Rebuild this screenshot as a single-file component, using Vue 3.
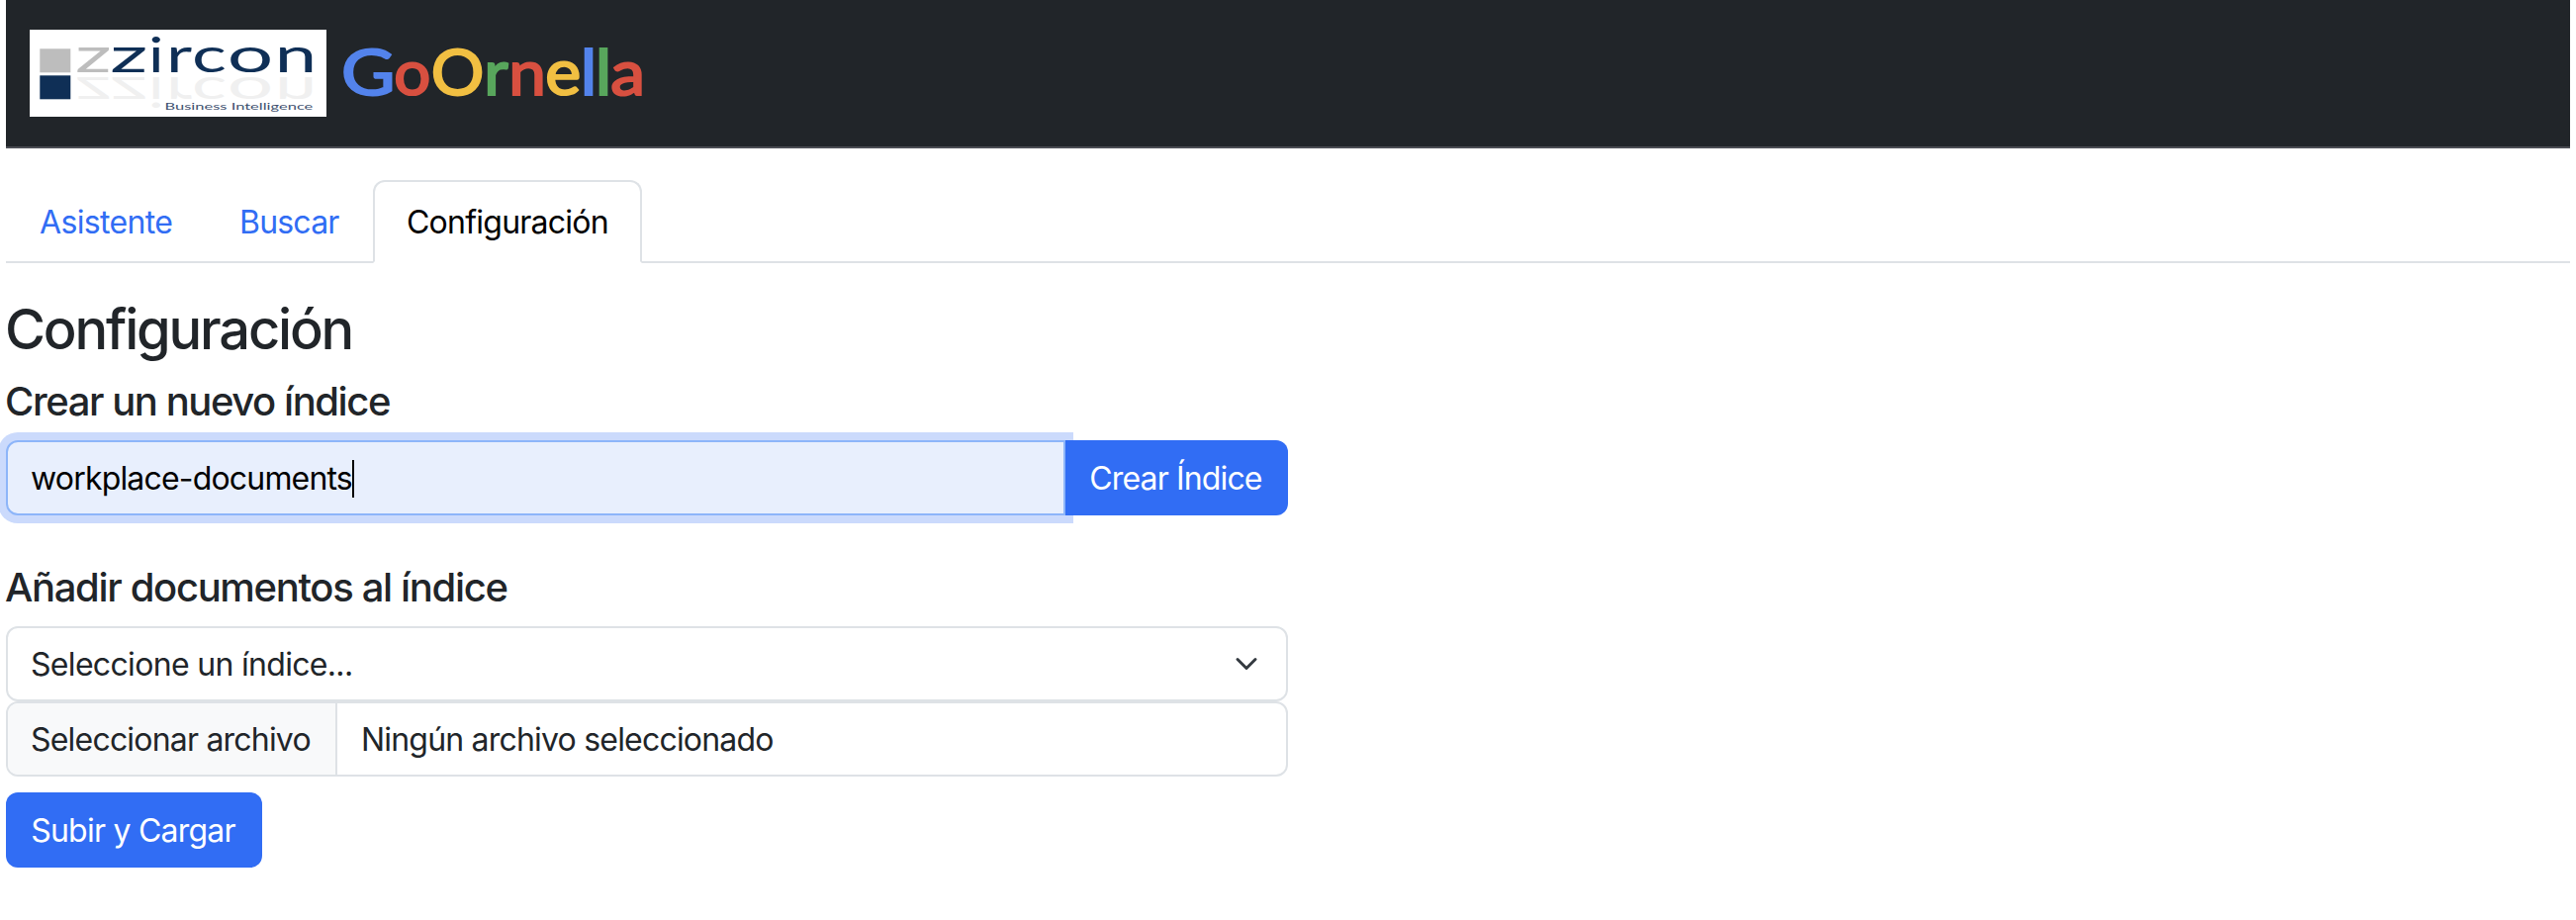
<script setup>
import { ref } from 'vue'

const tabs = [
  { label: 'Asistente', cls: 'assistant' },
  { label: 'Buscar', cls: 'search' },
  { label: 'Configuración', cls: 'settings' },
]
const active = ref('Configuración')
const indexName = ref('workplace-documents')

// Each letter: character, left offset, horizontal and vertical scale, colour
const brand = [
  { c: 'G', x: 15, sx: 0.745, sy: 0.648, fill: '#5383ec' },
  { c: 'o', x: 68.2, sx: 0.654, sy: 0.645, fill: '#d85040' },
  { c: 'O', x: 105.7, sx: 0.67, sy: 0.648, fill: '#f1bf42' },
  { c: 'r', x: 159.2, sx: 0.67, sy: 0.645, fill: '#58a65c' },
  { c: 'n', x: 184.2, sx: 0.674, sy: 0.645, fill: '#d85040' },
  { c: 'e', x: 221.2, sx: 0.68, sy: 0.645, fill: '#f1bf42' },
  { c: 'l', x: 256.8, sx: 0.7, sy: 0.635, fill: '#5383ec' },
  { c: 'l', x: 271.8, sx: 0.7, sy: 0.635, fill: '#58a65c' },
  { c: 'a', x: 287.2, sx: 0.7, sy: 0.645, fill: '#d85040' },
]
const zircon = [
  { c: 'z', x: 46, sx: 0.81, light: true },
  { c: 'z', x: 81.3, sx: 0.84 },
  { c: 'i', x: 120, sx: 0.65 },
  { c: 'r', x: 138, sx: 0.72 },
  { c: 'c', x: 164, sx: 0.73 },
  { c: 'o', x: 199.8, sx: 0.82 },
  { c: 'n', x: 247.7, sx: 0.76 },
]
const place = (l, base, sy) => `translate(${l.x} ${base}) scale(${l.sx} ${sy})`
</script>

<template>
  <div class="page">
    <header class="navbar">
      <svg class="company" width="300" height="88" viewBox="0 0 300 88">
        <rect width="300" height="88" fill="#fff" />
        <rect x="10.3" y="19.3" width="31" height="24" fill="#bdbdbd" />
        <rect x="10.3" y="46.3" width="31" height="24" fill="#0f2f56" />
        <text v-for="(l, i) in zircon" :key="'r' + i" class="zl" :transform="place(l, 48.3, -0.43)" fill="#f0f0f0">{{ l.c }}</text>
        <text v-for="(l, i) in zircon" :key="'z' + i" class="zl" :transform="place(l, 43.3, 0.475)" :fill="l.light ? '#bdbdbd' : '#0f2f56'">{{ l.c }}</text>
        <text class="bi" transform="translate(136.5 80.5) scale(.165 .096)">Business Intelligence</text>
      </svg>
      <svg class="brand" width="320" height="88" viewBox="0 0 320 88">
        <text v-for="(l, i) in brand" :key="i" class="bl" :transform="place(l, 66.2, l.sy)" :fill="l.fill" :stroke="l.fill">{{ l.c }}</text>
      </svg>
    </header>

    <nav class="tabs">
      <a v-for="t in tabs" :key="t.label" class="tab" :class="[t.cls, { active: active === t.label }]" @click="active = t.label">{{ t.label }}</a>
    </nav>

    <main class="content">
      <h3>Configuración</h3>
      <h5>Crear un nuevo índice</h5>
      <div class="group">
        <div class="field"><span>{{ indexName }}</span><i class="caret"></i></div>
        <button class="btn create">Crear Índice</button>
      </div>

      <h5 class="docs">Añadir documentos al índice</h5>
      <div class="select">
        <span>Seleccione un índice...</span>
        <svg width="24" height="24" viewBox="0 0 16 16" fill="none" stroke="#343a40" stroke-linecap="round" stroke-linejoin="round" stroke-width="2"><path d="m2 5 6 6 6-6" /></svg>
      </div>
      <div class="file">
        <span class="choose">Seleccionar archivo</span>
        <span class="none">Ningún archivo seleccionado</span>
      </div>
      <button class="btn upload">Subir y Cargar</button>
    </main>
  </div>
</template>

<style>
body {
  background: #fff;
}
</style>

<style scoped>
.page {
  box-sizing: border-box;
  height: 930px;
  padding: 0 6px;
  font: 400 32px/48px Inter, "Liberation Sans", sans-serif;
  letter-spacing: -0.8px;
  color: #212529;
  white-space: nowrap;
}
.page * {
  box-sizing: border-box;
}
.navbar {
  display: flex;
  align-items: center;
  height: 150px;
  padding: 0 24px;
  background: #212529;
  border-bottom: 2px solid #4b4d54;
}
.company,
.brand {
  display: block;
  letter-spacing: 0;
}
.zl {
  font: 400 100px Lato, sans-serif;
}
.bl {
  font: 400 100px Lato, sans-serif;
  stroke-width: 3.4px;
}
.bi {
  font: 400 100px Lato, sans-serif;
  fill: #3f5270;
}
.tabs {
  display: flex;
  height: 84px;
  margin-top: 32px;
  border-bottom: 2px solid #dee2e6;
}
.tab {
  height: 84px;
  padding: 17px 0 15px 32px;
  border: 2px solid transparent;
  border-radius: 12px 12px 0 0;
  color: #316df4;
}
.assistant {
  width: 202px;
  letter-spacing: -0.65px;
}
.search {
  width: 169px;
  letter-spacing: -0.8px;
}
.settings {
  width: 272px;
  letter-spacing: -0.76px;
}
.tab.active {
  color: #000;
  background: #fff;
  border-color: #dee2e6 #dee2e6 #fff;
}
.content {
  width: 1296px;
  padding-top: 32px;
}
h3,
h5 {
  margin: 0 0 15px;
  padding-top: 1px;
  font-weight: 500;
}
h3 {
  margin: 0 0 14px -1px;
  padding-top: 2px;
  font-size: 56px;
  line-height: 67px;
  letter-spacing: -2.2px;
}
h5 {
  margin-left: -1px;
  font-size: 40px;
  line-height: 48px;
  letter-spacing: -1.43px;
}
.docs {
  margin-top: 48px;
  letter-spacing: -1.34px;
}
.group {
  display: flex;
  height: 76px;
}
.field {
  display: flex;
  align-items: center;
  width: 1071px;
  padding: 1px 0 0 23px;
  color: #000;
  background: #e8effd;
  border: 2px solid #8db5f9;
  border-radius: 12px 0 0 12px;
  box-shadow: 0 0 0 8px #cbdafc;
  letter-spacing: -0.82px;
}
.caret {
  width: 2px;
  height: 38px;
  background: #000;
}
.btn {
  height: 76px;
  padding: 1px 2px 0 0;
  border: 0;
  border-radius: 12px;
  background: #316df4;
  color: #fff;
  font: inherit;
  letter-spacing: -0.76px;
  text-align: center;
}
.create {
  position: relative;
  flex: 1;
  border-radius: 0 12px 12px 0;
  letter-spacing: -0.86px;
}
.select {
  display: flex;
  align-items: center;
  justify-content: space-between;
  height: 76px;
  padding: 0 28px 0 23px;
  border: 2px solid #dee2e6;
  border-radius: 12px;
  letter-spacing: -0.68px;
}
.select span {
  padding-top: 2px;
}
.file {
  display: flex;
  height: 76px;
  overflow: hidden;
  border: 2px solid #dee2e6;
  border-radius: 12px;
}
.choose {
  width: 333px;
  padding: 13px 0 11px 23px;
  background: #f8f9fa;
  border-right: 2px solid #dee2e6;
}
.none {
  padding: 13px 24px 11px;
}
.upload {
  display: block;
  width: 259px;
  margin-top: 16px;
}
</style>
